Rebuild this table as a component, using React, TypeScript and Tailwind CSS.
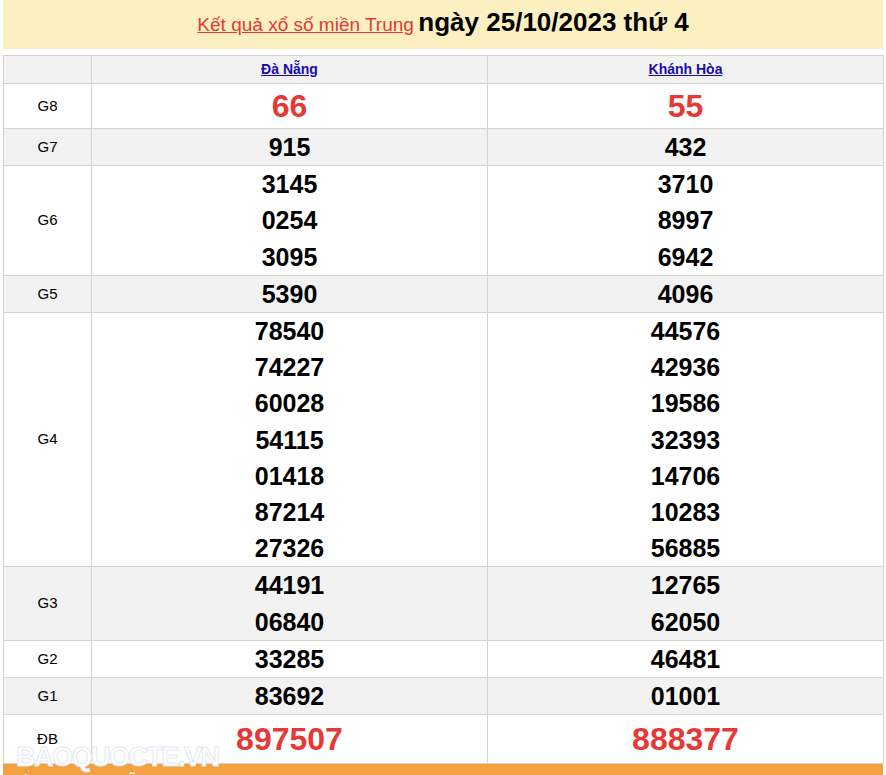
const rows: { label: string; a: string[]; b: string[]; kind?: "g8" | "db" }[] = [
  { label: "G8", a: ["66"], b: ["55"], kind: "g8" },
  { label: "G7", a: ["915"], b: ["432"] },
  { label: "G6", a: ["3145", "0254", "3095"], b: ["3710", "8997", "6942"] },
  { label: "G5", a: ["5390"], b: ["4096"] },
  {
    label: "G4",
    a: ["78540", "74227", "60028", "54115", "01418", "87214", "27326"],
    b: ["44576", "42936", "19586", "32393", "14706", "10283", "56885"],
  },
  { label: "G3", a: ["44191", "06840"], b: ["12765", "62050"] },
  { label: "G2", a: ["33285"], b: ["46481"] },
  { label: "G1", a: ["83692"], b: ["01001"] },
  { label: "ĐB", a: ["897507"], b: ["888377"], kind: "db" },
];

function Numbers({ list, kind }: { list: string[]; kind?: "g8" | "db" }) {
  if (kind === "g8") {
    return <div className="text-[32px] font-bold leading-[44px] text-[#e53935]">{list[0]}</div>;
  }
  if (kind === "db") {
    return <div className="text-[32px] font-bold leading-[48px] text-[#e53935]">{list[0]}</div>;
  }
  return (
    <div>
      {list.map((n) => (
        <div key={n} className="text-[25px] font-bold leading-[36.2px] text-black">
          {n}
        </div>
      ))}
    </div>
  );
}

export default function App() {
  return (
    <div className="relative w-[886px] h-[775px] overflow-hidden bg-white px-[3px] font-['Liberation_Sans',Arial,sans-serif]">
      <div className="h-[49px] bg-[#fcf0c0] text-center leading-[44px]">
        <a href="#" className="text-[19px] text-[#e53935] underline">
          Kết quả xổ số miền Trung
        </a>{" "}
        <span className="text-[26px] font-bold text-black">ngày 25/10/2023 thứ 4</span>
      </div>

      <table className="mt-[6px] w-[880px] table-fixed border-collapse">
        <colgroup>
          <col className="w-[88px]" />
          <col className="w-[396px]" />
          <col className="w-[396px]" />
        </colgroup>
        <thead>
          <tr className="bg-[#f2f2f2]">
            <th className="h-[28px] border border-[#d7d3cc] p-0"></th>
            <th className="border border-[#d7d3cc] p-0 text-[14px] font-bold text-[#1a0dab]">
              <a href="#" className="underline">Đà Nẵng</a>
            </th>
            <th className="border border-[#d7d3cc] p-0 text-[14px] font-bold text-[#1a0dab]">
              <a href="#" className="underline">Khánh Hòa</a>
            </th>
          </tr>
        </thead>
        <tbody>
          {rows.map((r, i) => (
            <tr key={r.label} className={i % 2 === 1 ? "bg-[#f2f2f2]" : "bg-white"}>
              <td className="border border-[#d7d3cc] p-0 text-center text-[15px] text-black">{r.label}</td>
              <td className="border border-[#d7d3cc] p-0 text-center">
                <Numbers list={r.a} kind={r.kind} />
              </td>
              <td className="border border-[#d7d3cc] p-0 text-center">
                <Numbers list={r.b} kind={r.kind} />
              </td>
            </tr>
          ))}
        </tbody>
      </table>

      <div className="flex h-[40px] items-start justify-between bg-[#f2a040] px-[10px] pt-[6px] text-[16px] font-bold text-white">
        <span>Đầu Lô tô Đà Nẵng - Lô tô Quảng</span>
        <span>Lô tô Khánh Hòa</span>
      </div>

      <div className="pointer-events-none absolute left-[16px] top-[737px] text-[27px] font-bold tracking-[-1.5px] text-white [-webkit-text-stroke:1px_#e3eaf1]">
        BAOQUOCTE.VN
      </div>
    </div>
  );
}
